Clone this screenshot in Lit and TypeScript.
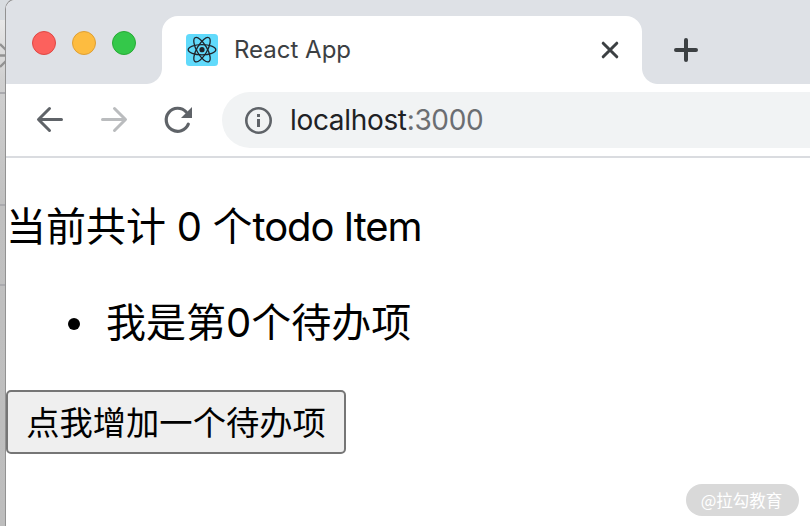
import { LitElement, html, css, svg } from "lit";
import { customElement, state } from "lit/decorators.js";

@customElement("browser-tabs")
class BrowserTabs extends LitElement {
  static styles = css`
    :host { display: flex; height: 84px; background: #dee1e6; box-sizing: border-box; padding-top: 16px; border-top-left-radius: 9px; }
    .lights { display: flex; gap: 16px; padding: 15px 0 0 26px; width: 130px; box-sizing: content-box; }
    .light { width: 24px; height: 24px; border-radius: 50%; box-sizing: border-box; border: 1px solid; }
    .close { background: #fc615d; border-color: #df4744; }
    .min { background: #fdbc40; border-color: #de9f34; }
    .max { background: #34c84a; border-color: #27aa35; }
    .tab { position: relative; width: 480px; height: 68px; box-sizing: border-box; background: #fff; border-radius: 16px 16px 0 0; display: flex; align-items: center; padding: 0 20px 0 24px; }
    .tab::before, .tab::after { content: ""; position: absolute; bottom: 0; width: 16px; height: 16px; }
    .tab::before { left: -16px; background: radial-gradient(circle at 0 0, transparent 15.5px, #fff 16.5px); }
    .tab::after { right: -16px; background: radial-gradient(circle at 100% 0, transparent 15.5px, #fff 16.5px); }
    .title { flex: 1; margin-left: 16px; font: 24px/32px Inter, "Liberation Sans", sans-serif; color: #3c4043; white-space: nowrap; }
    .plus { margin: 20px 0 0 30px; }
    svg { display: block; }
  `;
  render() {
    return html`
      <div class="lights">
        <span class="light close"></span><span class="light min"></span><span class="light max"></span>
      </div>
      <div class="tab">
        <svg width="32" height="32" viewBox="0 0 32 32">
          <rect width="32" height="32" rx="3.5" fill="#61dafb" />
          <g fill="none" stroke="#20232a" stroke-width="1.3">
            ${[0, 60, 120].map((a) => svg`<ellipse cx="16" cy="15.7" rx="13.8" ry="5.1" transform="rotate(${a} 16 15.7)" />`)}
          </g>
          <circle cx="16" cy="15.7" r="2.6" fill="#20232a" />
        </svg>
        <span class="title">React App</span>
        <svg width="24" height="24" viewBox="0 0 24 24">
          <path d="M5.2 5.2 18.8 18.8M18.8 5.2 5.2 18.8" stroke="#3c4043" stroke-width="3" stroke-linecap="round" />
        </svg>
      </div>
      <svg class="plus" width="28" height="28" viewBox="0 0 28 28">
        <path d="M14 4V24M4 14H24" stroke="#3c4043" stroke-width="4" stroke-linecap="round" />
      </svg>
    `;
  }
}

@customElement("browser-toolbar")
class BrowserToolbar extends LitElement {
  static styles = css`
    :host { display: flex; height: 74px; box-sizing: border-box; border-bottom: 2px solid #dadce0; align-items: center; padding-left: 28px; background: #fff; }
    .nav { display: flex; gap: 32px; width: 188px; }
    svg { display: block; }
    .address { flex: 1; height: 56px; border-radius: 28px 0 0 28px; background: #f1f3f4; display: flex; align-items: center; padding-left: 22px; }
    .url { margin-left: 18px; font: 28px/40px Inter, "Liberation Sans", sans-serif; letter-spacing: -0.33px; color: #202124; }
    .port { color: #6b6e72; }
  `;
  render() {
    return html`
      <div class="nav">
        <svg width="32" height="32" viewBox="0 0 32 32" fill="none" stroke="#5f6368" stroke-width="3" stroke-linecap="round" stroke-linejoin="round">
          <path d="M27.5 15.5H5M15.5 4.5 4.5 15.5 15.5 26.5" />
        </svg>
        <svg width="32" height="32" viewBox="0 0 32 32" fill="none" stroke="#babcbe" stroke-width="3" stroke-linecap="round" stroke-linejoin="round">
          <path d="M4.5 15.5H27M16.5 4.5 27.5 15.5 16.5 26.5" />
        </svg>
        <svg width="32" height="32" viewBox="0 0 32 32">
          <path d="M26.3 20.2A11.5 11.5 0 1 1 24.2 8" fill="none" stroke="#5f6368" stroke-width="3.2" stroke-linecap="round" />
          <path d="M30 3V14H19Z" fill="#5f6368" />
        </svg>
      </div>
      <div class="address">
        <svg width="28" height="28" viewBox="0 0 28 28">
          <circle cx="14.5" cy="14.5" r="12.2" fill="none" stroke="#5f6368" stroke-width="2.6" />
          <path d="M14.5 8V11M14.5 13V21" stroke="#5f6368" stroke-width="3" />
        </svg>
        <span class="url">localhost<span class="port">:3000</span></span>
      </div>
    `;
  }
}

@customElement("todo-page")
class TodoPage extends LitElement {
  @state() private items = [0];
  static styles = css`
    :host { display: block; font-family: Inter, "Noto Sans CJK SC", sans-serif; color: #000; }
    .count { margin: 0; padding: 38px 0 0; font-size: 40px; line-height: 56px; white-space: pre; }
    .list { margin: 0; padding: 40px 0 0 62px; list-style: none; font-size: 40px; line-height: 56px; }
    .item { display: flex; align-items: center; }
    .dot { width: 12px; height: 12px; border-radius: 50%; background: #000; margin: 2px 26px 0 0; }
    .add { display: block; box-sizing: border-box; width: 340px; height: 64px; margin: 39px 0 0; padding: 0 0 2px; border: 2px solid #767676; border-radius: 5px; background: #efefef; font: 33.3px/58px "Noto Sans CJK SC", sans-serif; color: #000; white-space: nowrap; }
    .cjk { font-family: "Noto Sans CJK SC", sans-serif; }
    .num { letter-spacing: -0.4px; }
    .latin { letter-spacing: -1.1px; }
  `;
  render() {
    return html`
      <p class="count"><span class="cjk">当前共计</span><span class="num"> 0 </span><span class="cjk">个</span><span class="latin">todo Item</span></p>
      <ul class="list">
        ${this.items.map((n) => html`<li class="item"><span class="dot"></span><span>我是第${n}个待办项</span></li>`)}
      </ul>
      <button class="add" @click=${() => (this.items = [...this.items, this.items.length])}>点我增加一个待办项</button>
    `;
  }
}

@customElement("app-root")
class AppRoot extends LitElement {
  static styles = css`
    :host { display: flex; position: relative; width: 810px; height: 526px; overflow: hidden; background: #fff; }
    .behind { width: 6px; flex: none; }
    .behind svg { display: block; }
    .window { flex: 1; min-width: 0; background: #fff; border-top-left-radius: 9px; box-shadow: 0 0 0 1px #929292; position: relative; }
    .mark { position: absolute; left: 686px; top: 484px; width: 113px; height: 32px; border-radius: 16px; background: #d9d9d9; color: #fff; font: 16.5px/32px "Noto Sans CJK SC", sans-serif; text-align: center; white-space: nowrap; text-indent: -2px; }
  `;
  render() {
    return html`
      <div class="behind">
        <svg width="16" height="526" viewBox="0 0 16 526">
          <defs>
            <linearGradient id="shade" x2="0" y2="1">
              <stop offset="0" stop-color="#f0f0f0" /><stop offset=".15" stop-color="#d0d0d0" />
              <stop offset=".4" stop-color="#c0c0c0" /><stop offset="1" stop-color="#bdbdbd" />
            </linearGradient>
          </defs>
          <rect width="16" height="526" fill="url(#shade)" />
          <rect width="16" height="20" fill="#d8dce0" />
          <path d="M0 55.5H6M0 44 6 50M0 67 6 61" stroke="#929292" stroke-width="2.4" />
          <path d="M0 93H6M0 205H6M0 285H6" stroke="#aaaaae" stroke-width="2" />
        </svg>
      </div>
      <div class="window">
        <browser-tabs></browser-tabs>
        <browser-toolbar></browser-toolbar>
        <todo-page></todo-page>
      </div>
      <div class="mark">@拉勾教育</div>
    `;
  }
}
